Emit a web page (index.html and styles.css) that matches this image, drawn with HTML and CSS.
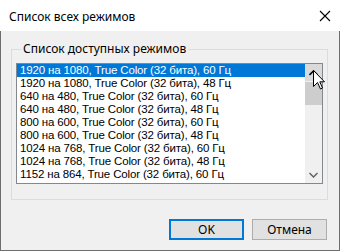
FILE: index.html
```html
<!DOCTYPE html>
<html lang="ru">
  <head>
    <meta charset="UTF-8" />
    <title>Список всех режимов</title>
    <link rel="stylesheet" href="styles.css">
  </head>
  <body>
    <div class="window">
      <div class="titlebar">
        <span class="title">Список всех режимов</span>
        <svg class="close" width="12" height="12" viewBox="0 0 12 12">
          <path d="M1 1 L11 11 M11 1 L1 11" stroke="#000" stroke-width="1.1" fill="none"/>
        </svg>
      </div>

      <div class="content">
        <fieldset class="group">
          <legend>Список доступных режимов</legend>
          <div class="listbox">
            <ul class="items">
              <li class="selected">1920 на 1080, True Color (32 бита), 60 Гц</li>
              <li>1920 на 1080, True Color (32 бита), 48 Гц</li>
              <li>640 на 480, True Color (32 бита), 60 Гц</li>
              <li>640 на 480, True Color (32 бита), 48 Гц</li>
              <li>800 на 600, True Color (32 бита), 60 Гц</li>
              <li>800 на 600, True Color (32 бита), 48 Гц</li>
              <li>1024 на 768, True Color (32 бита), 60 Гц</li>
              <li>1024 на 768, True Color (32 бита), 48 Гц</li>
              <li>1152 на 864, True Color (32 бита), 60 Гц</li>
            </ul>
            <div class="scrollbar">
              <div class="sb-btn hover">
                <svg width="9" height="6" viewBox="0 0 9 6"><path d="M0.5 5 L4.5 1 L8.5 5" stroke="#000" stroke-width="1.6" fill="none"/></svg>
              </div>
              <div class="thumb"></div>
              <div class="track"></div>
              <div class="sb-btn">
                <svg width="9" height="6" viewBox="0 0 9 6"><path d="M0.5 1 L4.5 5 L8.5 1" stroke="#606060" stroke-width="1.4" fill="none"/></svg>
              </div>
            </div>
            <!-- mouse pointer over the up arrow -->
            <svg class="cursor" width="13" height="20" viewBox="0 0 13 20">
              <path d="M0.5 0.5 L0.5 16.5 L4.5 12.5 L7.5 19 L9.5 18 L6.8 11.8 L11.5 11.8 Z" fill="#fff" stroke="#000" stroke-width="1"/>
            </svg>
          </div>
        </fieldset>

        <div class="buttons">
          <button class="btn default">OK</button>
          <button class="btn">Отмена</button>
        </div>
      </div>
    </div>
  </body>
</html>
```

FILE: styles.css
```css
body {
  margin: 0;
  font-family: "Noto Sans", "Liberation Sans", sans-serif;
  font-size: 12px;
  color: #000;
}

.window {
  width: 340px;
  height: 251px;
  box-sizing: border-box;
  border: 1px solid #6e6e6e;
  border-top: none;
  background: #f0f0f0;
  display: flex;
  flex-direction: column;
}

/* title bar */
.titlebar {
  height: 31px;
  background: #fff;
  display: flex;
  align-items: center;
  justify-content: space-between;
  padding: 0 9px 0 9px;
  margin: 0 -1px;
}
.title {
  font-size: 12px;
  padding-top: 1px;
}
.close {
  display: block;
}

.content {
  flex: 1;
  padding: 11px 11px 0 10px;
  display: flex;
  flex-direction: column;
}

/* group box */
.group {
  margin: 0;
  padding: 7px 4px 14px 4px;
  border: 1px solid #dcdcdc;
  height: 158px;
  box-sizing: border-box;
}
.group legend {
  padding: 0 2px;
  margin-left: 5px;
  line-height: 14px;
}

.listbox {
  position: relative;
  display: flex;
  border: 1px solid #828790;
  background: #fff;
  height: 119px;
}

ul.items {
  flex: 1;
  margin: 0;
  padding: 0;
  list-style: none;
  font-family: "Liberation Sans", sans-serif;
  font-size: 11.5px;
  letter-spacing: -0.15px;
}
ul.items li {
  height: 13px;
  line-height: 13px;
  padding-left: 3px;
  white-space: nowrap;
}
ul.items li.selected {
  background: #0078d7;
  color: #fff;
}

/* scrollbar */
.scrollbar {
  width: 17px;
  background: #f0f0f0;
  display: flex;
  flex-direction: column;
}
.sb-btn {
  height: 17px;
  display: flex;
  align-items: center;
  justify-content: center;
}
.sb-btn.hover {
  background: #dadada;
}
.thumb {
  height: 23px;
  background: #cdcdcd;
  margin-top: 1px;
}
.track {
  flex: 1;
}

.cursor {
  position: absolute;
  left: 296px;
  top: 6px;
}

/* dialog buttons */
.buttons {
  display: flex;
  justify-content: flex-end;
  gap: 8px;
  margin-top: 19px;
  padding-right: 1px;
}
.btn {
  width: 75px;
  height: 21px;
  font-family: inherit;
  font-size: 12px;
  background: #e1e1e1;
  border: 1px solid #adadad;
  padding: 0;
  color: #000;
}
.btn.default {
  border: 2px solid #0078d7;
}
```
